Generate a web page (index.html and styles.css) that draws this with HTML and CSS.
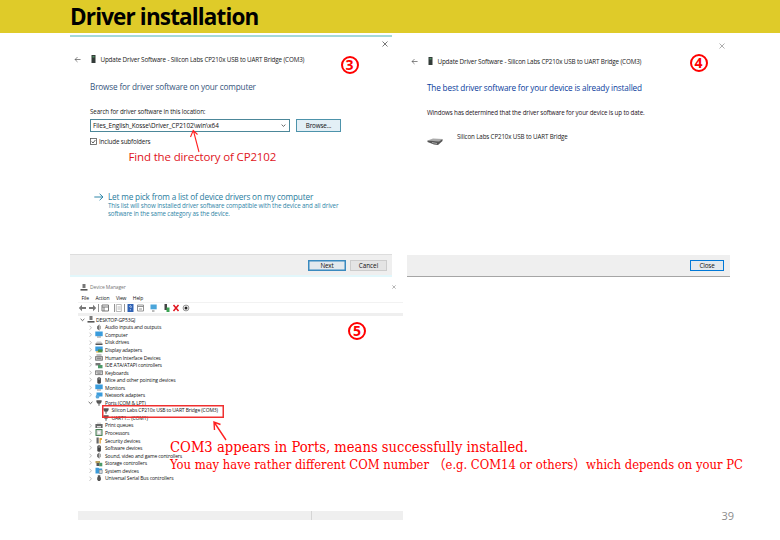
FILE: index.html
```
<!DOCTYPE html>
<html lang="en">
<head>
<meta charset="utf-8">
<title>Driver installation</title>
<link rel="stylesheet" href="styles.css">
</head>
<body>
<svg class="defs" width="0" height="0">
  <symbol id="back" viewBox="0 0 8 8"><path d="M7.5 4H1M4 1.2L1.2 4L4 6.8" fill="none" stroke="#555" stroke-width=".8"/></symbol>
  <symbol id="close" viewBox="0 0 6 6"><path d="M.5 .5L5.5 5.5M5.5 .5L.5 5.5" fill="none" stroke="currentColor" stroke-width=".8"/></symbol>
  <symbol id="tower" viewBox="0 0 5 8"><rect x=".5" width="4" height="8" fill="#333b38"/><rect x="1.5" y="1.2" width="2" height="1.2" fill="#54a66c"/></symbol>
  <symbol id="chev" viewBox="0 0 4 6"><path d="M1 .8L3 3L1 5.2" fill="none" stroke="#999" stroke-width=".7"/></symbol>
  <symbol id="down" viewBox="0 0 5 5"><path d="M.6 1.6L2.5 3.4L4.4 1.6" fill="none" stroke="#444" stroke-width=".8"/></symbol>
  <symbol id="pc" viewBox="0 0 8 7"><path d="M2.5 0h3v4h-3z" fill="#777"/><path d="M.5 5h7v1.6h-7z" fill="#555"/></symbol>
  <symbol id="speaker" viewBox="0 0 8 7"><path d="M2 2.5L4.5 .3v6.4L2 4.8z" fill="#777"/><path d="M5.5 1.8v3.4" stroke="#aaa"/></symbol>
  <symbol id="monitor" viewBox="0 0 8 7"><path d="M.3 .5h7.4v4.7H.3z" fill="#3a9cdc"/><path d="M2 6h4" stroke="#777" stroke-width=".8"/></symbol>
  <symbol id="disk" viewBox="0 0 8 7"><path d="M2 2.5h4l1.5 2h-7z" fill="#ccc"/><path d="M.5 4.5h7V6h-7z" fill="#555"/></symbol>
  <symbol id="display" viewBox="0 0 8 7"><path d="M.3 .5h7.4v4.7H.3z" fill="#3a9cdc"/><path d="M3 3.4h4.5v3H3z" fill="#4d8f45"/><path d="M1.2 5.3h2v1.2h-2z" fill="#e0a52c"/></symbol>
  <symbol id="hid" viewBox="0 0 8 7"><path d="M.5 2.5h7v3.8h-7z" fill="#bbb" stroke="#666" stroke-width=".7"/><path d="M1.5 1h5M2 4.3h4" stroke="#777" stroke-width=".9"/></symbol>
  <symbol id="ide" viewBox="0 0 8 7"><path d="M.5 1h5v2.5h-5z" fill="#777"/><path d="M3 3h4.5v3.3H3z" fill="#4d9a68"/></symbol>
  <symbol id="keyboard" viewBox="0 0 8 7"><path d="M.4 1.8h7.2v3.8H.4z" fill="#ddd" stroke="#555" stroke-width=".7"/><path d="M1.4 3.1h5.2M2.4 4.4h3.2" stroke="#666" stroke-width=".6"/></symbol>
  <symbol id="mouse" viewBox="0 0 8 7"><rect x="2.3" y=".3" width="3.6" height="6.4" rx="1.5" fill="#444"/><path d="M4.1 .8v2" stroke="#ddd" stroke-width=".7"/></symbol>
  <symbol id="net" viewBox="0 0 8 7"><path d="M1.5 .5h6v4h-6z" fill="#3a9cdc"/><circle cx="2.5" cy="4.7" r="1.9" fill="#5aa9dc"/></symbol>
  <symbol id="port" viewBox="0 0 8 7"><path d="M1.4 1.2h5.2v1.7L5.3 4.7H2.7L1.4 2.9z" fill="#555"/><path d="M4 4.5v2.3" stroke="#555"/></symbol>
  <symbol id="printer" viewBox="0 0 8 7"><path d="M.4 2h7.2v4H.4z" fill="#666"/><path d="M2 .5h4v1.5H2zM2 4h4v1.6H2z" fill="#ddd"/></symbol>
  <symbol id="cpu" viewBox="0 0 8 7"><rect x="1" y=".6" width="6" height="5.8" fill="#ddd" stroke="#3c7a4c"/><path d="M3 2.5h2v2H3z" fill="#fff"/></symbol>
  <symbol id="security" viewBox="0 0 8 7"><path d="M1.5 .5h2.2v6H1.5z" fill="#666"/><path d="M4.5 1h2.4v2H5.8v3.5H4.5z" fill="#e0a53c"/></symbol>
  <symbol id="storage" viewBox="0 0 8 7"><path d="M.5 1h4.5v2.2H.5z" fill="#b9a260"/><path d="M1.5 3h3v3h-3z" fill="#555"/><path d="M4.3 2.8h3v3.5h-3z" fill="#4d9a68"/></symbol>
  <symbol id="system" viewBox="0 0 8 7"><path d="M.5 .8h3l.7.8h3v4.8H.5z" fill="#3a9cdc"/><path d="M4.2 3h3v3.4h-3z" fill="#ddd" stroke="#777" stroke-width=".5"/></symbol>
  <symbol id="usb" viewBox="0 0 8 7"><path d="M2.8 .2h2.5v2H2.8zM2.2 2.2h3.7v2.6L4.9 6H3.2L2.2 4.8z" fill="#555"/></symbol>
</svg>

<header class="banner"><h1>Driver installation</h1></header>

<main class="slide">
  <div class="col">
    <section class="wizard first">
      <div class="topline"><svg class="x"><use href="#close"/></svg></div>
      <div class="caption"><svg class="back"><use href="#back"/></svg><svg class="tower"><use href="#tower"/></svg><span>Update Driver Software - Silicon Labs CP210x USB to UART Bridge (COM3)</span></div>
      <div class="content">
        <h2>Browse for driver software on your computer</h2>
        <div class="label">Search for driver software in this location:</div>
        <div class="fields">
          <div class="combo"><span>Files_English_Kosse\Driver_CP2102\win\x64</span><svg class="dn"><use href="#down"/></svg></div>
          <div class="btn browse">Browse...</div>
        </div>
        <div class="check"><svg class="box" viewBox="0 0 7 7"><rect x=".5" y=".5" width="6" height="6" fill="#fff" stroke="#555" stroke-width=".8"/><path d="M1.7 3.5L3 5L5.4 2" fill="none" stroke="#333" stroke-width=".8"/></svg><span>Include subfolders</span></div>
        <div class="pick">
          <svg class="go" viewBox="0 0 10 8"><path d="M.3 4H9M5.6 .8L9 4L5.6 7.2" fill="none" stroke="#2f86a8"/></svg>
          <div><div class="pick-title">Let me pick from a list of device drivers on my computer</div>
          <div class="pick-text">This list will show installed driver software compatible with the device and all driver</div>
          <div class="pick-text second">software in the same category as the device.</div></div>
        </div>
      </div>
      <footer class="foot"><div class="btn primary next">Next</div><div class="btn cancel">Cancel</div></footer>
    </section>

    <section class="devmgr">
      <div class="dm-title"><svg class="ic"><use href="#pc"/></svg><span>Device Manager</span><svg class="x"><use href="#close"/></svg></div>
      <nav class="menu"><span>File</span><span>Action</span><span>View</span><span>Help</span></nav>
      <div class="tools">
        <svg width="112" height="10" viewBox="0 0 112 10">
          <path d="M8 4H4V1.7L.8 5L4 8.3V6h4z" fill="#777"/><path d="M11 4h4V1.7L18.2 5L15 8.3V6h-4z" fill="#777"/>
          <path d="M20.5 1v8M36.5 1v8M46.5 1v8" stroke="#777" stroke-width=".8"/>
          <path d="M24 2h6.5v6H24zM26 4v4M24 4h6.5" fill="#fff" stroke="#777"/>
          <path d="M38.3 1.5h5v7h-5zM39.5 4h3M39.5 6h3" fill="#fff" stroke="#aaa" stroke-width=".8"/>
          <path d="M49.5 1h6v8h-6z" fill="#2f62b5"/><path d="M51.3 3.5q1.2-1.5 2 0q0 .8-.9 1.500M52.4 6.300v1" fill="none" stroke="#fff" stroke-width=".8"/>
          <path d="M59.5 2h6v6h-6zM59.5 3.5h6M61 6h3" fill="#fff" stroke="#888" stroke-width=".9"/>
          <path d="M72.5 1.5h6.2v4.8h-6.2z" fill="#4aa5da"/><path d="M74 8h2.5" stroke="#777"/>
          <path d="M86.5 1h2.500v6h-2.500z" fill="#444"/><path d="M88.5 4.5h3V9h-3z" fill="#3ba352"/>
          <path d="M95.5 2L100.5 8M100.5 2L95.5 8" stroke="#e0131d" stroke-width="1.5"/>
          <circle cx="108" cy="5" r="2.9" fill="#fff" stroke="#777" stroke-width=".8"/><circle cx="108" cy="5" r="1.5" fill="#222"/>
        </svg>
      </div>
      <ul class="tree">
        <li class="root"><svg class="ch"><use href="#down"/></svg><svg class="ic"><use href="#pc"/></svg><span>DESKTOP-GP53GJ</span></li>
        <li><svg class="ch"><use href="#chev"/></svg><svg class="ic"><use href="#speaker"/></svg><span>Audio inputs and outputs</span></li>
        <li><svg class="ch"><use href="#chev"/></svg><svg class="ic"><use href="#monitor"/></svg><span>Computer</span></li>
        <li><svg class="ch"><use href="#chev"/></svg><svg class="ic"><use href="#disk"/></svg><span>Disk drives</span></li>
        <li><svg class="ch"><use href="#chev"/></svg><svg class="ic"><use href="#display"/></svg><span>Display adapters</span></li>
        <li><svg class="ch"><use href="#chev"/></svg><svg class="ic"><use href="#hid"/></svg><span>Human Interface Devices</span></li>
        <li><svg class="ch"><use href="#chev"/></svg><svg class="ic"><use href="#ide"/></svg><span>IDE ATA/ATAPI controllers</span></li>
        <li><svg class="ch"><use href="#chev"/></svg><svg class="ic"><use href="#keyboard"/></svg><span>Keyboards</span></li>
        <li><svg class="ch"><use href="#chev"/></svg><svg class="ic"><use href="#mouse"/></svg><span>Mice and other pointing devices</span></li>
        <li><svg class="ch"><use href="#chev"/></svg><svg class="ic"><use href="#monitor"/></svg><span>Monitors</span></li>
        <li><svg class="ch"><use href="#chev"/></svg><svg class="ic"><use href="#net"/></svg><span>Network adapters</span></li>
        <li><svg class="ch"><use href="#down"/></svg><svg class="ic"><use href="#port"/></svg><span>Ports (COM &amp; LPT)</span></li>
        <li class="leaf marked"><svg class="ic"><use href="#port"/></svg><span>Silicon Labs CP210x USB to UART Bridge (COM3)</span></li>
        <li class="leaf uart"><svg class="ic"><use href="#port"/></svg><span>UART1... (COM1)</span></li>
        <li><svg class="ch"><use href="#chev"/></svg><svg class="ic"><use href="#printer"/></svg><span>Print queues</span></li>
        <li><svg class="ch"><use href="#chev"/></svg><svg class="ic"><use href="#cpu"/></svg><span>Processors</span></li>
        <li><svg class="ch"><use href="#chev"/></svg><svg class="ic"><use href="#security"/></svg><span>Security devices</span></li>
        <li><svg class="ch"><use href="#chev"/></svg><svg class="ic"><use href="#mouse"/></svg><span>Software devices</span></li>
        <li><svg class="ch"><use href="#chev"/></svg><svg class="ic"><use href="#speaker"/></svg><span>Sound, video and game controllers</span></li>
        <li><svg class="ch"><use href="#chev"/></svg><svg class="ic"><use href="#storage"/></svg><span>Storage controllers</span></li>
        <li><svg class="ch"><use href="#chev"/></svg><svg class="ic"><use href="#system"/></svg><span>System devices</span></li>
        <li><svg class="ch"><use href="#chev"/></svg><svg class="ic"><use href="#usb"/></svg><span>Universal Serial Bus controllers</span></li>
      </ul>
      <div class="status"></div>
    </section>
  </div>

  <section class="wizard second-wiz">
    <div class="topline"><svg class="x"><use href="#close"/></svg></div>
    <div class="caption"><svg class="back"><use href="#back"/></svg><svg class="tower"><use href="#tower"/></svg><span>Update Driver Software - Silicon Labs CP210x USB to UART Bridge (COM3)</span></div>
    <div class="content">
      <h2>The best driver software for your device is already installed</h2>
      <p>Windows has determined that the driver software for your device is up to date.</p>
      <div class="device">
        <svg class="drive" viewBox="0 0 16 9"><path d="M.5 3.5L6 1.5L15.5 2L12 5z" fill="#aaa"/><path d="M.5 3.5L12 4.5L15.5 2V4L11 8L7 7.5L.5 5z" fill="#555"/><path d="M5 5.5L10 6.5" stroke="#ccc" stroke-width=".7"/></svg>
        <span>Silicon Labs CP210x USB to UART Bridge</span>
      </div>
    </div>
    <footer class="foot"><div class="btn primary closebtn">Close</div></footer>
  </section>
</main>

<div class="num n3">3</div>
<div class="num n4">4</div>
<div class="num n5">5</div>
<svg class="arrows" width="780" height="540" viewBox="0 0 780 540" fill="none" stroke="#f22" stroke-width="1.4">
  <path d="M199 152L193.500 131M190.500 137L193.200 130.500L197.500 134.500" stroke-width="1.1"/>
  <path d="M226 440L214 422M214.500 430L214 422L220.500 424.500"/>
</svg>
<div class="note find">Find the directory of CP2102</div>
<div class="note line1">COM3 appears in Ports, means successfully installed.</div>
<div class="note line2">You may have rather different COM number （e.g. COM14 or others）which depends on your PC</div>
<div class="page">39</div>
</body>
</html>
```
FILE: styles.css
```
* { box-sizing: border-box; margin: 0; padding: 0; }
body { width: 780px; height: 540px; overflow: hidden; background: #fff; color: #222; font-family: "Open Sans", "Noto Sans", sans-serif; position: relative; white-space: nowrap; }
svg { display: block; flex: none; }
.defs { position: absolute; }
.banner { height: 33px; background: #dfcb29; padding-left: 70px; }
h1 { font-size: 22.5px; line-height: 33px; font-weight: 700; letter-spacing: -.86px; color: #000; }
.slide { display: grid; grid-template-columns: 337px 323px; padding-left: 70px; height: 507px; }

.wizard { display: flex; flex-direction: column; }
.first { margin-top: 2px; width: 322px; height: 242px; border-top: 2px solid #a5d8d7; border-bottom: 2px solid #e2f7fb; }
.topline { display: flex; justify-content: flex-end; height: 16px; padding: 4px 4px 0 0; }
.x { width: 6px; height: 6px; color: #555; }
.caption { display: flex; align-items: center; height: 12px; font-size: 6.3px; letter-spacing: -.16px; color: #222; }
.back { width: 7px; height: 7px; margin-left: 4px; }
.tower { width: 5px; height: 8px; margin: 0 5px 0 9.5px; }
.content { flex: 1; padding-left: 20px; }
h2 { font-weight: 400; font-size: 8.2px; letter-spacing: -.16px; line-height: 12px; color: #35557c; margin-top: 16px; }
.label { font-size: 6.2px; letter-spacing: -.11px; line-height: 10px; margin-top: 14px; }
.fields { display: flex; gap: 6px; margin-top: 2px; }
.combo { display: flex; align-items: center; justify-content: space-between; width: 200px; height: 13px; border: 1px solid #4c8799; padding: 0 3px 0 2px; font-size: 6.4px; letter-spacing: -.08px; color: #111; }
.dn { width: 5px; height: 5px; }
.btn { display: flex; align-items: center; justify-content: center; border: 1px solid #adadad; background: #e4e4e4; font-size: 6.3px; color: #111; }
.browse { width: 45px; height: 13px; border-color: #4d93ab; background: #e3eff6; letter-spacing: -.14px; }
.check { display: flex; align-items: center; gap: 2px; height: 8px; margin-top: 5px; font-size: 6.3px; letter-spacing: -.16px; }
.box { width: 7px; height: 7px; }
.pick { display: flex; gap: 4px; margin: 46px 0 0 4px; color: #2f86a8; }
.go { width: 10px; height: 8px; margin-top: 2px; }
.pick-title { font-size: 8.2px; letter-spacing: -.16px; line-height: 11px; color: #287b9d; }
.pick-text { font-size: 6.2px; letter-spacing: -.1px; line-height: 8px; }
.second { letter-spacing: -.13px; }
.foot { display: flex; justify-content: flex-end; align-items: center; height: 21px; background: #efefef; }
.first .foot { border-top: 1px solid #ddd; gap: 4px; padding-right: 5px; }
.primary { border: 1px solid #3a8abf; background: #e3e9ee; box-shadow: inset 0 0 0 .5px #3a8abf; }
.next { width: 38px; height: 11px; letter-spacing: -.2px; }
.cancel { width: 37px; height: 11px; border-color: #ccc; }

.second-wiz { height: 244px; width: 323px; }
.second-wiz .topline { height: 22px; padding: 9.5px 5px 0 0; }
.second-wiz .x { color: #999; }
.second-wiz .content { padding-left: 20px; }
.second-wiz h2 { color: #0a3c9c; margin-top: 15px; }
.second-wiz p { font-size: 6.2px; letter-spacing: -.12px; line-height: 10px; margin-top: 14px; color: #1c1018; }
.device { display: flex; gap: 14px; margin-top: 13px; font-size: 6.2px; letter-spacing: -.12px; line-height: 12px; }
.drive { width: 16px; height: 9px; margin-top: 6px; }
.second-wiz .foot { height: 22px; border-bottom: 1px solid #a5a5a5; padding-right: 6px; }
.closebtn { width: 34px; height: 11px; border: 1px solid #0078d7; box-shadow: none; letter-spacing: -.14px; }

.devmgr { width: 325px; margin-left: 8px; font-size: 5px; letter-spacing: -.12px; color: #111; }
.dm-title { display: flex; align-items: center; height: 16px; margin-top: 2px; padding-left: 2px; gap: 2px; color: #777; }
.ic { width: 8px; height: 7px; }
.dm-title .x { width: 4px; height: 4px; margin: 0 7px 0 auto; color: #777; }
.menu { display: flex; align-items: center; height: 7px; gap: 6.5px; padding-left: 3.5px; margin-top: -1px; }
.tools { height: 14px; border-bottom: 3px solid #efefef; border-top: 1px solid #f2f2f2; margin-top: 1px; }
.tree { list-style: none; height: 166px; }
.tree li { display: flex; align-items: center; height: 7.55px; padding-left: 10px; gap: 2px; }
.tree .ch { width: 5px; height: 5.5px; }
.tree .root { padding-left: 2px; gap: 1.5px; }
.tree .leaf { padding-left: 24px; gap: 1.5px; }
.marked { position: relative; }
.marked::after { content: ""; position: absolute; left: 24px; top: -1.5px; width: 120px; height: 10.5px; border: 1px solid #ef3030; box-shadow: inset 0 0 0 .5px #ef3030; }
.status { width: 325px; height: 9px; margin-top: 29px; background: linear-gradient(90deg, #efefef 233px, #d5d5d5 233px, #d5d5d5 234px, #efefef 234px); }

.num { position: absolute; width: 18px; height: 18px; border: 2px solid #f00; border-radius: 50%; color: #f00; font-weight: 700; font-size: 14px; line-height: 14px; text-align: center; }
.n3 { left: 340.5px; top: 55.5px; }
.n4 { left: 689.5px; top: 53.5px; }
.n5 { left: 348px; top: 322px; }
.arrows { position: absolute; left: 0; top: 0; }
.note { position: absolute; color: #f00; }
.find { left: 128.5px; top: 149px; font-size: 11.5px; line-height: 16px; letter-spacing: -.15px; color: #e0141c; }
.line1, .line2 { font-family: "DejaVu Serif Condensed", "DejaVu Serif", "Noto Sans CJK SC", serif; font-stretch: condensed; left: 170px; transform-origin: 0 0; }
.line1 { top: 437px; font-size: 15px; line-height: 20px; transform: scaleX(.976); }
.line2 { top: 455px; font-size: 13px; line-height: 20px; transform: scaleX(.991); }
.page { position: absolute; left: 721.5px; top: 508px; font-size: 11px; line-height: 15px; color: #8c8c8c; }
```
